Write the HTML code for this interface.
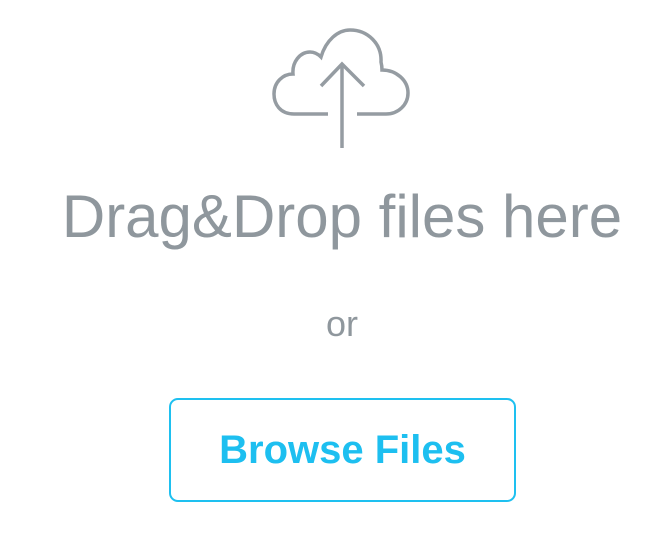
<!DOCTYPE html>
<html><head><style>
html,body{margin:0;padding:0;background:#fff;width:664px;height:536px;overflow:hidden;font-family:"Liberation Sans",Arial,sans-serif}
.t{position:absolute;left:10px;width:664px;text-align:center;white-space:nowrap}
#h{top:182px;font-size:60px;line-height:70px;color:#8f979d}
#or{top:302px;font-size:36px;line-height:44px;color:#8f979d}
#btn{position:absolute;left:169px;top:398px;width:343px;height:100px;border:2px solid #1ec0f0;border-radius:9px;box-sizing:content-box}
#bt{position:absolute;left:0;width:100%;top:27px;text-align:center;font-weight:bold;font-size:40px;line-height:46px;color:#1dbff0}
</style></head><body>
<svg width="664" height="170" style="position:absolute;left:0;top:0" fill="none" stroke="#959ca2" stroke-width="3.5" stroke-linecap="butt" stroke-linejoin="miter">
<path d="M328,114 H294 C280,114 274,104 274,94 C274,82 283,74 293,74 C292,62 300,52 310,52 C314,52 318,54 321,57 C326,40 338,30 350,30 C368,30 382,44 381,62 C382,66 382,68 382,70 C396,70 408,80 408,93 C408,105 398,114 386,114 H357"/>
<path d="M342,148 V64 M321,86 L342,64 L364,86"/>
</svg>
<div class="t" id="h">Drag&amp;Drop files here</div>
<div class="t" id="or">or</div>
<div id="btn"><div id="bt">Browse Files</div></div>
</body></html>
